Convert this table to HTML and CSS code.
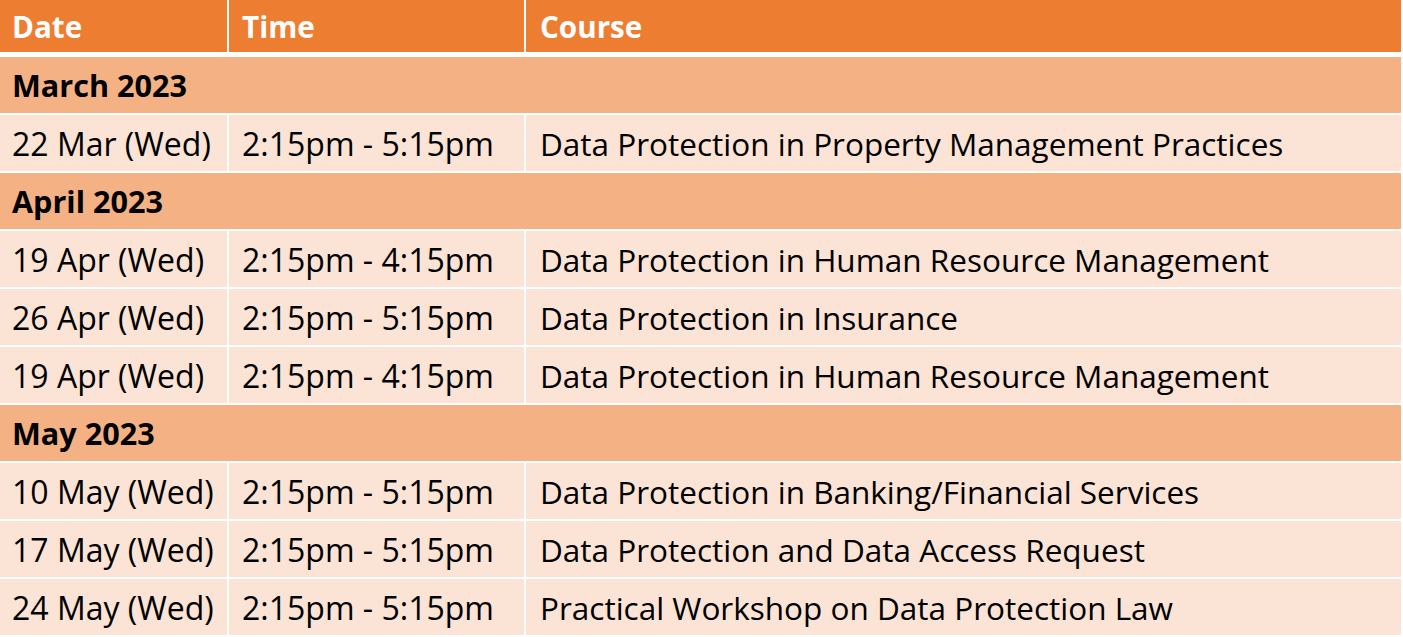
FILE: index.html
```html
<!DOCTYPE html>
<html>
<head>
<meta charset="utf-8">
<link rel="stylesheet" href="styles.css">
</head>
<body>
<div class="schedule">
  <div class="row head">
    <div class="cell">Date</div>
    <div class="cell">Time</div>
    <div class="cell">Course</div>
  </div>
  <div class="month">March 2023</div>
  <div class="row">
    <div class="cell">22 Mar (Wed)</div>
    <div class="cell">2:15pm - 5:15pm</div>
    <div class="cell">Data Protection in Property Management Practices</div>
  </div>
  <div class="month">April 2023</div>
  <div class="row">
    <div class="cell">19 Apr (Wed)</div>
    <div class="cell">2:15pm - 4:15pm</div>
    <div class="cell">Data Protection in Human Resource Management</div>
  </div>
  <div class="row">
    <div class="cell">26 Apr (Wed)</div>
    <div class="cell">2:15pm - 5:15pm</div>
    <div class="cell">Data Protection in Insurance</div>
  </div>
  <div class="row">
    <div class="cell">19 Apr (Wed)</div>
    <div class="cell">2:15pm - 4:15pm</div>
    <div class="cell">Data Protection in Human Resource Management</div>
  </div>
  <div class="month">May 2023</div>
  <div class="row">
    <div class="cell">10 May (Wed)</div>
    <div class="cell">2:15pm - 5:15pm</div>
    <div class="cell">Data Protection in Banking/Financial Services</div>
  </div>
  <div class="row">
    <div class="cell">17 May (Wed)</div>
    <div class="cell">2:15pm - 5:15pm</div>
    <div class="cell">Data Protection and Data Access Request</div>
  </div>
  <div class="row">
    <div class="cell">24 May (Wed)</div>
    <div class="cell">2:15pm - 5:15pm</div>
    <div class="cell">Practical Workshop on Data Protection Law</div>
  </div>
</div>
</body>
</html>
```
FILE: styles.css
```css
html, body {
  margin: 0;
  padding: 0;
  background: #ffffff;
}
body {
  overflow: hidden;
}
.schedule {
  width: 1401px;
  display: flex;
  flex-direction: column;
  gap: 2px;
  font-family: "Open Sans", "Liberation Sans", sans-serif;
  font-size: 32px;
  color: #000000;
}
.row {
  display: grid;
  grid-template-columns: 227px 295px 875px;
  column-gap: 2px;
  height: 56px;
}
.cell {
  background: #fbe4d6;
  padding-left: 12px;
  display: flex;
  align-items: center;
  white-space: nowrap;
}
.row .cell:nth-child(2) {
  padding-left: 13px;
}
.row .cell:nth-child(3) {
  padding-left: 14px;
  font-size: 31.5px;
}
.head {
  height: 52px;
  margin-bottom: 3px;
}
.head .cell,
.head .cell:nth-child(3) {
  background: #ed7d31;
  color: #ffffff;
  font-weight: 700;
  font-size: 29.6px;
}
.month {
  height: 56px;
  background: #f4b183;
  padding-left: 12px;
  display: flex;
  align-items: center;
  font-weight: 700;
  font-size: 30.6px;
}
```
